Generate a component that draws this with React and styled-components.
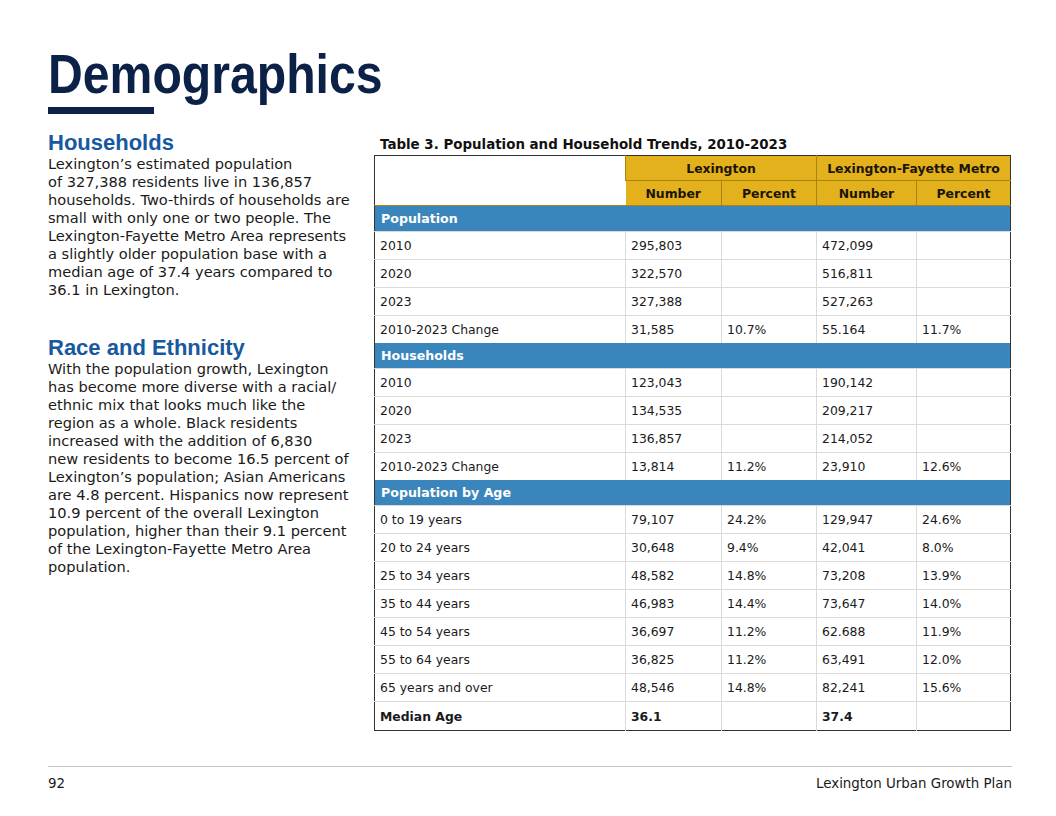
import React from "react";
import styled, { createGlobalStyle } from "styled-components";

const GlobalStyle = createGlobalStyle`
  html, body { margin: 0; padding: 0; background: #fff; }
  body { font-family: "DejaVu Sans", "Open Sans", sans-serif; color: #1a1a1a; }
`;

const Page = styled.div`
  width: 1056px;
  height: 816px;
  box-sizing: border-box;
  padding: 44px 44px 0 48px;
  display: flex;
  flex-direction: column;
`;

// condensed DIN-like headline
const Title = styled.h1`
  margin: 0;
  font-family: "Liberation Sans", Arial, sans-serif;
  font-weight: 700;
  font-size: 56px;
  line-height: 60px;
  color: #0c2148;
  transform: scaleX(0.86);
  transform-origin: left center;
  white-space: nowrap;
`;

const TitleBar = styled.div`
  width: 106px;
  height: 7px;
  background: #0c2148;
  margin-top: 3px;
`;

const Body = styled.div`
  display: flex;
  gap: 18px;
  margin-top: 17px;
  flex: 1;
`;

const TextColumn = styled.div`
  width: 308px;
  display: flex;
  flex-direction: column;
  gap: 37px;
`;

const Section = styled.section``;

const SectionTitle = styled.h2`
  margin: 0;
  font-family: "Liberation Sans", Arial, sans-serif;
  font-weight: 700;
  font-size: 22px;
  line-height: 24px;
  color: #17589f;
`;

const Paragraph = styled.p`
  margin: 0;
  font-size: 14.6px;
  line-height: 18px;
  color: #1a1a1a;
  white-space: nowrap;
`;

const TableColumn = styled.div`
  width: 636px;
  display: flex;
  flex-direction: column;
`;

const Caption = styled.div`
  font-weight: 700;
  font-size: 13.4px;
  line-height: 16px;
  margin: 6px 0 2px;
  padding-left: 6px;
  color: #111;
`;

const Table = styled.table`
  border-collapse: collapse;
  width: 636px;
  border: 1.5px solid #333;
  font-size: 12.4px;
  table-layout: fixed;
`;

const HeadCell = styled.th`
  background: ${(p) => (p.$blank ? "#fff" : "#e2b11c")};
  border-left: 1px solid #a88413;
  border-bottom: 1px solid #a88413;
  height: 24px;
  padding: 0;
  font-weight: 700;
  font-size: 12.4px;
  color: #1c1405;
  text-align: center;
  &:first-child {
    border-left: none;
  }
`;

const GroupRow = styled.td`
  background: #3a86bc;
  color: #fff;
  font-weight: 700;
  height: 25px;
  padding: 0 6px;
  font-size: 12.6px;
`;

const Cell = styled.td`
  height: ${(p) => p.$h || 27}px;
  padding: 0 5px;
  border-left: 1px solid #dadada;
  border-top: 1px solid #dadada;
  font-weight: ${(p) => (p.$bold ? 700 : 400)};
  color: #1a1a1a;
  white-space: nowrap;
  &:first-child {
    border-left: none;
  }
`;

const Footer = styled.footer`
  border-top: 1px solid #c4c4c4;
  width: 964px;
  height: 48px;
  display: flex;
  justify-content: space-between;
  align-items: flex-start;
  padding-top: 9px;
  box-sizing: border-box;
  font-size: 13.4px;
  color: #1a1a1a;
  margin-bottom: 2px;
`;

const householdsText = [
  "Lexington’s estimated population",
  "of 327,388 residents live in 136,857",
  "households. Two-thirds of households are",
  "small with only one or two people. The",
  "Lexington-Fayette Metro Area represents",
  "a slightly older population base with a",
  "median age of 37.4 years compared to",
  "36.1 in Lexington.",
];

const raceText = [
  "With the population growth, Lexington",
  "has become more diverse with a racial/",
  "ethnic mix that looks much like the",
  "region as a whole. Black residents",
  "increased with the addition of 6,830",
  "new residents to become 16.5 percent of",
  "Lexington’s population; Asian Americans",
  "are 4.8 percent. Hispanics now represent",
  "10.9 percent of the overall Lexington",
  "population, higher than their 9.1 percent",
  "of the Lexington-Fayette Metro Area",
  "population.",
];

const sections = [
  {
    name: "Population",
    rows: [
      ["2010", "295,803", "", "472,099", ""],
      ["2020", "322,570", "", "516,811", ""],
      ["2023", "327,388", "", "527,263", ""],
      ["2010-2023 Change", "31,585", "10.7%", "55.164", "11.7%"],
    ],
  },
  {
    name: "Households",
    rows: [
      ["2010", "123,043", "", "190,142", ""],
      ["2020", "134,535", "", "209,217", ""],
      ["2023", "136,857", "", "214,052", ""],
      ["2010-2023 Change", "13,814", "11.2%", "23,910", "12.6%"],
    ],
  },
  {
    name: "Population by Age",
    rows: [
      ["0 to 19 years", "79,107", "24.2%", "129,947", "24.6%"],
      ["20 to 24 years", "30,648", "9.4%", "42,041", "8.0%"],
      ["25 to 34 years", "48,582", "14.8%", "73,208", "13.9%"],
      ["35 to 44 years", "46,983", "14.4%", "73,647", "14.0%"],
      ["45 to 54 years", "36,697", "11.2%", "62.688", "11.9%"],
      ["55 to 64 years", "36,825", "11.2%", "63,491", "12.0%"],
      ["65 years and over", "48,546", "14.8%", "82,241", "15.6%"],
    ],
  },
];

const Lines = ({ lines }) =>
  lines.map((l, i) => (
    <React.Fragment key={i}>
      {l}
      {i < lines.length - 1 && <br />}
    </React.Fragment>
  ));

const App = () => {
  return (
    <>
      <GlobalStyle />
      <Page>
        <Title>Demographics</Title>
        <TitleBar />
        <Body>
          <TextColumn>
            <Section>
              <SectionTitle>Households</SectionTitle>
              <Paragraph>
                <Lines lines={householdsText} />
              </Paragraph>
            </Section>
            <Section>
              <SectionTitle>Race and Ethnicity</SectionTitle>
              <Paragraph>
                <Lines lines={raceText} />
              </Paragraph>
            </Section>
          </TextColumn>

          <TableColumn>
            <Caption>Table 3. Population and Household Trends, 2010-2023</Caption>
            <Table>
              <colgroup>
                <col style={{ width: 251 }} />
                <col style={{ width: 96 }} />
                <col style={{ width: 95 }} />
                <col style={{ width: 100 }} />
                <col style={{ width: 94 }} />
              </colgroup>
              <thead>
                <tr>
                  <HeadCell $blank rowSpan={2} />
                  <HeadCell colSpan={2}>Lexington</HeadCell>
                  <HeadCell colSpan={2}>Lexington-Fayette Metro</HeadCell>
                </tr>
                <tr>
                  <HeadCell>Number</HeadCell>
                  <HeadCell>Percent</HeadCell>
                  <HeadCell>Number</HeadCell>
                  <HeadCell>Percent</HeadCell>
                </tr>
              </thead>
              <tbody>
                {sections.map((s) => (
                  <React.Fragment key={s.name}>
                    <tr>
                      <GroupRow colSpan={5}>{s.name}</GroupRow>
                    </tr>
                    {s.rows.map((r, i) => (
                      <tr key={s.name + i}>
                        {r.map((v, j) => (
                          <Cell key={j}>{v}</Cell>
                        ))}
                      </tr>
                    ))}
                  </React.Fragment>
                ))}
                <tr>
                  <Cell $bold $h={28}>Median Age</Cell>
                  <Cell $bold>36.1</Cell>
                  <Cell />
                  <Cell $bold>37.4</Cell>
                  <Cell />
                </tr>
              </tbody>
            </Table>
          </TableColumn>
        </Body>
        <Footer>
          <span>92</span>
          <span>Lexington Urban Growth Plan</span>
        </Footer>
      </Page>
    </>
  );
};

export default App;
